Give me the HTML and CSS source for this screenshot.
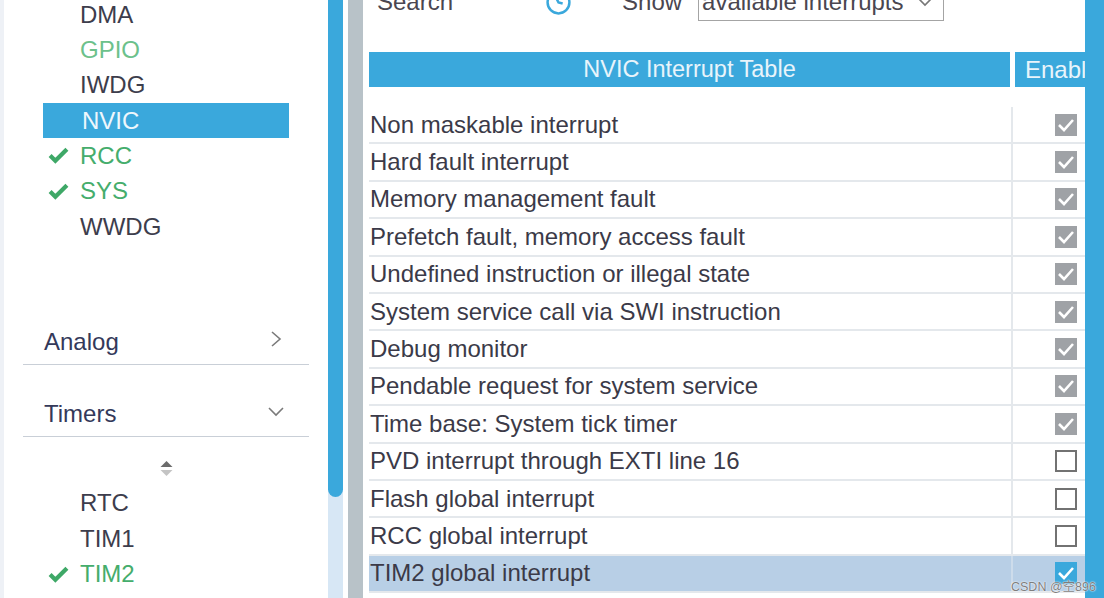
FILE: index.html
```html
<!DOCTYPE html>
<html lang="en">
<head>
    <meta charset="UTF-8">
    <title>NVIC Configuration</title>
    <link rel="stylesheet" href="styles.css">
</head>
<body>
    <div class="app">
        <div class="edge"></div>

        <aside class="sidebar">
            <ul class="periph-list">
                <li class="periph">DMA</li>
                <li class="periph periph-ok">GPIO</li>
                <li class="periph">IWDG</li>
                <li class="periph active">NVIC</li>
                <li class="periph periph-done"><svg class="tick" viewBox="0 0 20 16"><polyline points="2,8 7,13 18,2"/></svg>RCC</li>
                <li class="periph periph-done"><svg class="tick" viewBox="0 0 20 16"><polyline points="2,8 7,13 18,2"/></svg>SYS</li>
                <li class="periph">WWDG</li>
            </ul>

            <div class="section section-first">
                <span>Analog</span>
                <svg class="chevron-right" viewBox="0 0 12 18"><polyline points="2,2 10,9 2,16"/></svg>
            </div>
            <div class="section">
                <span>Timers</span>
                <svg class="chevron-down" viewBox="0 0 18 12"><polyline points="2,2 9,9 16,2"/></svg>
            </div>

            <div class="sort-row">
                <svg class="sort-icon" viewBox="0 0 12 15">
                    <path class="sort-up" d="M6 0 L12 6 L0 6 Z"/>
                    <path class="sort-down" d="M0 9 L12 9 L6 15 Z"/>
                </svg>
            </div>

            <ul class="periph-list timers">
                <li class="periph">RTC</li>
                <li class="periph">TIM1</li>
                <li class="periph periph-done"><svg class="tick" viewBox="0 0 20 16"><polyline points="2,8 7,13 18,2"/></svg>TIM2</li>
            </ul>
        </aside>

        <div class="side-scroll"><div class="side-thumb"></div></div>
        <div class="spacer"></div>
        <div class="splitter"></div>

        <main class="main">
            <div class="toolbar">
                <span class="label">Search</span>
                <svg class="search-icon" viewBox="0 0 26 26">
                    <circle cx="13" cy="13" r="10.5"/>
                    <polyline points="10,7 13,13 17,14"/>
                </svg>
                <span class="label show-label">Show</span>
                <div class="dropdown">
                    <span>available interrupts</span>
                    <svg class="dropdown-arrow" viewBox="0 0 16 10"><polyline points="1,1 8,8 15,1"/></svg>
                </div>
            </div>

            <div class="table-head">
                <div class="head-cell head-name">NVIC Interrupt Table</div>
                <div class="head-cell head-enable">Enable</div>
            </div>

            <div class="rows">
                <div class="row"><div class="cell-name">Non maskable interrupt</div><div class="cell-check"><span class="box box-locked"><svg viewBox="0 0 22 22"><polyline points="4,11 9,16 18,6"/></svg></span></div></div>
                <div class="row"><div class="cell-name">Hard fault interrupt</div><div class="cell-check"><span class="box box-locked"><svg viewBox="0 0 22 22"><polyline points="4,11 9,16 18,6"/></svg></span></div></div>
                <div class="row"><div class="cell-name">Memory management fault</div><div class="cell-check"><span class="box box-locked"><svg viewBox="0 0 22 22"><polyline points="4,11 9,16 18,6"/></svg></span></div></div>
                <div class="row"><div class="cell-name">Prefetch fault, memory access fault</div><div class="cell-check"><span class="box box-locked"><svg viewBox="0 0 22 22"><polyline points="4,11 9,16 18,6"/></svg></span></div></div>
                <div class="row"><div class="cell-name">Undefined instruction or illegal state</div><div class="cell-check"><span class="box box-locked"><svg viewBox="0 0 22 22"><polyline points="4,11 9,16 18,6"/></svg></span></div></div>
                <div class="row"><div class="cell-name">System service call via SWI instruction</div><div class="cell-check"><span class="box box-locked"><svg viewBox="0 0 22 22"><polyline points="4,11 9,16 18,6"/></svg></span></div></div>
                <div class="row"><div class="cell-name">Debug monitor</div><div class="cell-check"><span class="box box-locked"><svg viewBox="0 0 22 22"><polyline points="4,11 9,16 18,6"/></svg></span></div></div>
                <div class="row"><div class="cell-name">Pendable request for system service</div><div class="cell-check"><span class="box box-locked"><svg viewBox="0 0 22 22"><polyline points="4,11 9,16 18,6"/></svg></span></div></div>
                <div class="row"><div class="cell-name">Time base: System tick timer</div><div class="cell-check"><span class="box box-locked"><svg viewBox="0 0 22 22"><polyline points="4,11 9,16 18,6"/></svg></span></div></div>
                <div class="row"><div class="cell-name">PVD interrupt through EXTI line 16</div><div class="cell-check"><span class="box"></span></div></div>
                <div class="row"><div class="cell-name">Flash global interrupt</div><div class="cell-check"><span class="box"></span></div></div>
                <div class="row"><div class="cell-name">RCC global interrupt</div><div class="cell-check"><span class="box"></span></div></div>
                <div class="row row-selected"><div class="cell-name">TIM2 global interrupt</div><div class="cell-check"><span class="box box-on"><svg viewBox="0 0 22 22"><polyline points="4,11 9,16 18,6"/></svg></span></div></div>
            </div>
        </main>

        <div class="main-scroll"></div>
    </div>

    <div class="watermark">CSDN @空896</div>
</body>
</html>
```

FILE: styles.css
```css
:root {
    --blue: #3aa8dc;
    --text: #3d3d4c;
    --green: #45ad6c;
    --green-light: #6cc18b;
    --line: #e4e8ec;
}

body {
    margin: 0;
    font-family: "Liberation Sans", Arial, sans-serif;
    font-size: 24px;
    color: var(--text);
    background: #ffffff;
    overflow: hidden;
}

.app {
    display: flex;
    height: 598px;
    overflow: hidden;
}

.edge {
    width: 4px;
    background-color: #eef1f6;
}

/* Sidebar */
.sidebar {
    width: 324px;
    background-color: #ffffff;
}

.periph-list {
    list-style: none;
    margin: -3px 0 0 0;
    padding: 0;
}

.periph {
    height: 35.33px;
    margin: 0 39px;
    padding-left: 37px;
    display: flex;
    align-items: center;
    line-height: 1;
}

.periph.active {
    background-color: var(--blue);
    color: #eef7fc;
    padding-left: 39px;
}

.periph-ok {
    color: var(--green-light);
}

.periph-done {
    color: var(--green);
    padding-left: 5px;
}

.tick {
    width: 21px;
    height: 17px;
    margin-right: 11px;
    fill: none;
    stroke: #3ea867;
    stroke-width: 4;
}

.section {
    height: 44px;
    margin: 27px 19px 0 19px;
    padding: 0 27px 0 21px;
    display: flex;
    align-items: center;
    justify-content: space-between;
    border-bottom: 1.5px solid #c9cfd7;
    color: #34395a;
}

.section-first {
    margin-top: 76px;
}

.chevron-right {
    width: 12px;
    height: 18px;
    fill: none;
    stroke: #7a7a7a;
    stroke-width: 1.6;
    margin-top: -6px;
}

.chevron-down {
    width: 18px;
    height: 12px;
    fill: none;
    stroke: #7a7a7a;
    stroke-width: 1.6;
    margin-right: -3px;
    margin-top: -4px;
}

.sort-row {
    height: 48px;
    display: flex;
    justify-content: center;
    align-items: flex-start;
}

.sort-icon {
    width: 13px;
    height: 15px;
    margin-top: 24px;
}

.sort-up {
    fill: #6c6c6c;
}

.sort-down {
    fill: #c4c4c4;
}

.timers {
    margin-top: 0;
}

.timers .periph {
    height: 35.5px;
}

/* Scrollbars and splitter */
.side-scroll {
    width: 15px;
    background-color: #d7e7f5;
}

.side-thumb {
    height: 497px;
    background-color: var(--blue);
    border-radius: 0 0 8px 8px;
}

.spacer {
    width: 5px;
}

.splitter {
    width: 15px;
    background-color: #b8c2c8;
}

.main-scroll {
    width: 19px;
    background-color: var(--blue);
}

/* Main panel */
.main {
    flex: 1;
    padding-left: 6px;
    min-width: 0;
}

.toolbar {
    height: 40px;
    margin-top: -18px;
    display: flex;
    align-items: center;
}

.label {
    color: #4a4650;
    margin-left: 8px;
}

.search-icon {
    width: 27px;
    height: 27px;
    margin-left: 92px;
    fill: none;
    stroke: var(--blue);
    stroke-width: 2.4;
}

.show-label {
    margin-left: 50px;
}

.dropdown {
    width: 246px;
    height: 38px;
    margin-left: 16px;
    border: 1px solid #a4a4a4;
    display: flex;
    align-items: center;
    justify-content: space-between;
    padding: 0 10px 0 3px;
    box-sizing: border-box;
    color: #4a4650;
}

.dropdown-arrow {
    width: 16px;
    height: 10px;
    fill: none;
    stroke: #777777;
    stroke-width: 1.6;
}

.table-head {
    margin-top: 30px;
    height: 35px;
    display: flex;
    gap: 5px;
}

.head-cell {
    background-color: var(--blue);
    color: #e8f4fb;
    display: flex;
    align-items: center;
    white-space: nowrap;
    overflow: hidden;
}

.head-name {
    width: 641px;
    justify-content: center;
    font-size: 23.5px;
}

.head-enable {
    flex: 1;
    padding-left: 10px;
}

.rows {
    margin-top: 20px;
}

.row {
    display: flex;
    height: 35.4px;
    border-bottom: 2px solid var(--line);
}

.row-selected {
    background-color: #b8cfe6;
}

.cell-name {
    width: 641px;
    padding-left: 1px;
    display: flex;
    align-items: center;
    color: #3b3a48;
    white-space: nowrap;
}

.cell-check {
    flex: 1;
    border-left: 2px solid var(--line);
    display: flex;
    align-items: center;
    justify-content: flex-end;
    padding-right: 8px;
}

.row-selected .cell-check {
    border-left-color: #cddceb;
}

.box {
    width: 22px;
    height: 22px;
    box-sizing: border-box;
    border: 2px solid #727272;
    background-color: #ffffff;
    display: flex;
}

.box svg {
    width: 100%;
    height: 100%;
    fill: none;
    stroke: #ffffff;
    stroke-width: 2.6;
}

.box-locked {
    background-color: #9fa2a6;
    border-color: #9fa2a6;
}

.box-on {
    background-color: var(--blue);
    border-color: var(--blue);
}

.box-locked svg,
.box-on svg {
    margin: -2px;
    width: 22px;
    height: 22px;
}

.watermark {
    position: absolute;
    left: 1011px;
    top: 576px;
    font-family: "Liberation Sans", "Noto Sans CJK SC", sans-serif;
    font-size: 12.5px;
    color: #7e7e7e;
    text-shadow: 0 0 2px #ffffff, 0 0 1px #ffffff;
}
```
